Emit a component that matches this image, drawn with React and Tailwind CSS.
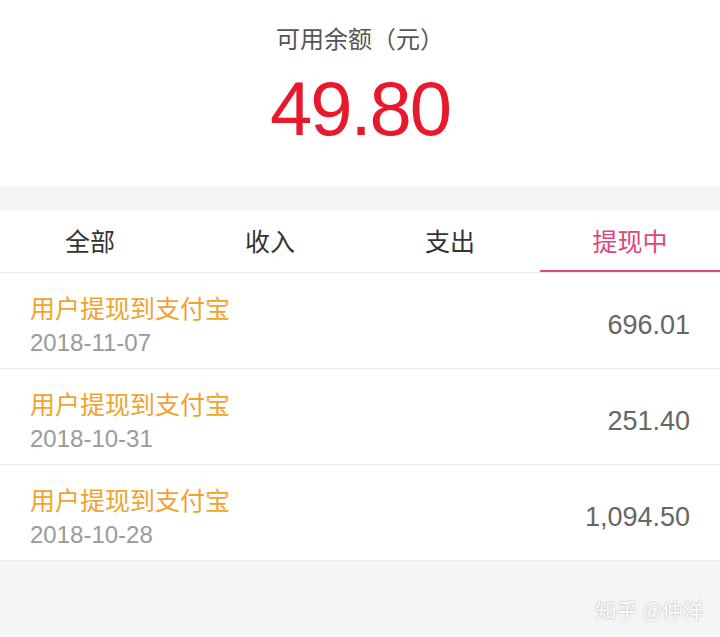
// App.jsx - wallet balance / withdrawal list
const font = "font-['Roboto','Noto_Sans_CJK_SC',sans-serif]";

const tabs = ["全部", "收入", "支出", "提现中"];

const records = [
  { title: "用户提现到支付宝", date: "2018-11-07", amount: "696.01" },
  { title: "用户提现到支付宝", date: "2018-10-31", amount: "251.40" },
  { title: "用户提现到支付宝", date: "2018-10-28", amount: "1,094.50" },
];

const App = () => {
  const active = 3;

  return (
    <div className={`w-[720px] h-[637px] bg-[#f5f5f5] overflow-hidden ${font}`}>
      {/* Balance */}
      <div className="bg-white h-[186px] flex flex-col items-center">
        <div className="mt-[22px] text-[24px] leading-[32px] text-[#555] font-['Noto_Sans_CJK_SC',sans-serif]">
          可用余额（元）
        </div>
        <div className="mt-[10px] text-[76px] leading-[90px] text-[#e8192c] font-['Liberation_Sans',sans-serif] tracking-[-2px]">
          49.80
        </div>
      </div>

      {/* Tabs */}
      <div className="mt-[24px] bg-white h-[63px] flex border-b border-[#e9e9e9]">
        {tabs.map((t, i) => (
          <div key={t} className="flex-1 flex flex-col">
            <div
              className={`flex-1 flex items-center justify-center pt-[2px] text-[25px] font-['Noto_Sans_CJK_SC',sans-serif] ${
                i === active ? "text-[#e0467a]" : "text-[#333]"
              }`}
            >
              {t}
            </div>
            <div className={`h-[2px] ${i === active ? "bg-[#e24a74]" : "bg-transparent"}`} />
          </div>
        ))}
      </div>

      {/* Records */}
      <div className="bg-white">
        {records.map((r) => (
          <div key={r.date} className="h-[96px] flex justify-between pl-[30px] pr-[30px] border-b border-[#e9e9e9]">
            <div className="flex flex-col pt-[18px]">
              <div className="text-[25px] leading-[32px] text-[#f0a32c] font-['Noto_Sans_CJK_SC',sans-serif]">
                {r.title}
              </div>
              <div className="mt-[5px] text-[24px] leading-[30px] text-[#9a9a9a] font-['Liberation_Sans',sans-serif]">
                {r.date}
              </div>
            </div>
            <div className="pt-[36px] text-[27px] leading-[32px] text-[#666] font-['Liberation_Sans',sans-serif]">
              {r.amount}
            </div>
          </div>
        ))}
      </div>

      {/* Watermark */}
      <div className="flex justify-end pr-[16px] mt-[33px]">
        <span className="text-[21px] text-white font-['Noto_Sans_CJK_SC',sans-serif] [text-shadow:0_0_2px_rgba(0,0,0,0.35)]">
          知乎 @仲洋
        </span>
      </div>
    </div>
  );
};

export default App;
